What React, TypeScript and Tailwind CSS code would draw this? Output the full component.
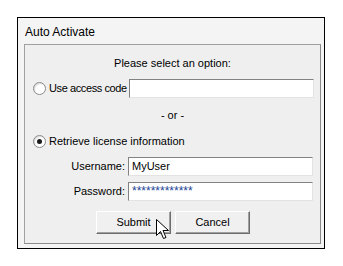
import React from "react";

function Radio({ checked }: { checked?: boolean }) {
  return (
    <span className="relative flex h-[13px] w-[13px] shrink-0 items-center justify-center rounded-full border border-[#8a8a8a] bg-white shadow-[inset_1px_1px_1px_rgba(0,0,0,0.15)]">
      {checked && <span className="h-[5px] w-[5px] rounded-full bg-[#1a1a1a]" />}
    </span>
  );
}

function Field({ value, className = "" }: { value?: string; className?: string }) {
  return (
    <div
      className={`flex h-[19px] w-[185px] shrink-0 items-center border-t border-l border-[#828282] border-r-[#e3e3e3] border-b-[#e3e3e3] border-r border-b bg-white pl-[3px] ${className}`}
    >
      {value}
    </div>
  );
}

function Button({ label }: { label: string }) {
  return (
    <div className="flex h-[23px] w-[75px] items-center justify-center border border-t-white border-l-white border-r-[#6d6d6d] border-b-[#6d6d6d] bg-[#f0f0f0] shadow-[inset_-1px_-1px_0_#a0a0a0]">
      {label}
    </div>
  );
}

export default function App() {
  return (
    <div className="h-[266px] w-[343px] bg-white pl-[17px] pt-[17px] text-[11px] leading-[13px] text-black [font-family:'Liberation_Sans',Arial,sans-serif]">
      <div className="h-[232px] w-[308px] border border-black bg-[#f4f4f4]">
        <div className="flex h-[26px] items-center pl-[7px] pt-[2px] text-[12px]">Auto Activate</div>
        <div className="ml-[6px] h-[200px] w-[297px] border-t border-l border-[#a0a0a0] border-r border-r-[#8a8a8a] border-b border-b-[#8a8a8a] bg-[#efefef]">
          <div className="mt-[12px] text-center">Please select an option:</div>

          <div className="mt-[9px] flex items-center pl-[8px]">
            <Radio />
            <span className="ml-[3px] w-[80px] whitespace-nowrap tracking-[-0.4px]">Use access code</span>
            <Field />
          </div>

          <div className="mt-[11px] text-center">- or -</div>

          <div className="mt-[13px] flex items-center pl-[8px]">
            <Radio checked />
            <span className="ml-[3px] whitespace-nowrap">Retrieve license information</span>
          </div>

          <div className="mt-[9px] flex items-center">
            <span className="w-[103px] shrink-0 pr-[3px] text-right">Username:</span>
            <Field value="MyUser" />
          </div>

          <div className="mt-[6px] flex items-center">
            <span className="w-[103px] shrink-0 pr-[3px] text-right">Password:</span>
            <Field className="text-[#1c3f94] text-[12px]" value="*************" />
          </div>

          <div className="relative mt-[10px] flex gap-[4px] pl-[71px]">
            <Button label="Submit" />
            <Button label="Cancel" />
            <svg
              className="absolute left-[131px] top-[8px]"
              width="14"
              height="21"
              viewBox="0 0 14 21"
            >
              <path
                d="M0.5 0.5 L0.5 16.5 L4.5 12.5 L7.5 19.5 L10 18.5 L7 11.5 L12.5 11.5 Z"
                fill="white"
                stroke="black"
                strokeWidth="1"
                strokeLinejoin="miter"
              />
            </svg>
          </div>
        </div>
      </div>
    </div>
  );
}
